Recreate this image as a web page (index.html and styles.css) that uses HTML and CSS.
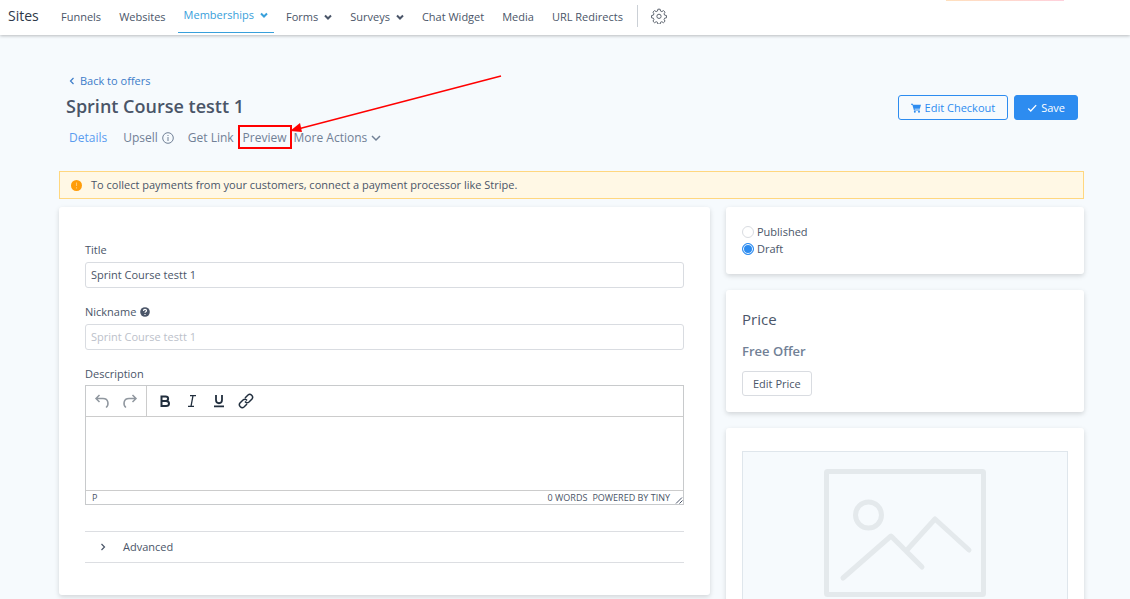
FILE: index.html
```html
<!DOCTYPE html>
<html lang="en">
<head>
    <meta charset="UTF-8">
    <meta name="viewport" content="width=device-width, initial-scale=1.0">
    <title>Sprint Course testt 1</title>
    <link rel="stylesheet" href="styles.css">
</head>
<body>

<header class="topbar">
    <span class="brand">Sites</span>
    <nav class="nav">
        <a href="#">Funnels</a>
        <a href="#">Websites</a>
        <button type="button" class="active">Memberships <svg class="caret" viewBox="0 0 8 8"><path d="M1 2.5l3 3 3-3"/></svg></button>
        <button type="button">Forms <svg class="caret" viewBox="0 0 8 8"><path d="M1 2.5l3 3 3-3"/></svg></button>
        <button type="button">Surveys <svg class="caret" viewBox="0 0 8 8"><path d="M1 2.5l3 3 3-3"/></svg></button>
        <a href="#">Chat Widget</a>
        <a href="#">Media</a>
        <a href="#">URL Redirects</a>
    </nav>
    <button type="button" class="settings" aria-label="Settings">
        <svg viewBox="0 0 24 24"><path d="M10.3 1.8h3.4l.6 2.8 2 .8 2.4-1.5 2.4 2.4-1.5 2.4.8 2 2.8.6v3.4l-2.8.6-.8 2 1.5 2.4-2.4 2.4-2.4-1.5-2 .8-.6 2.8h-3.4l-.6-2.8-2-.8-2.4 1.5-2.4-2.4 1.5-2.4-.8-2-2.8-.6v-3.4l2.8-.6.8-2-1.5-2.4 2.4-2.4 2.4 1.5 2-.8z"/><circle cx="12" cy="12.5" r="3.2"/></svg>
    </button>
    <span class="strip"></span>
</header>

<main class="page">
    <div class="page-head">
        <div>
            <a href="#" class="back"><svg viewBox="0 0 8 8"><path d="M5.5 1l-3 3 3 3"/></svg>Back to offers</a>
            <h1>Sprint Course testt 1</h1>
        </div>
        <div class="actions">
            <button type="button" class="btn btn-outline">
                <svg viewBox="0 0 12 12"><path fill="currentColor" d="M0 1h2.2l.4 1.2H12L10.6 7H4.3l.2.9h6v1H3.6L1.6 2H0z"/><circle cx="4.6" cy="10.4" r="1.2" fill="currentColor"/><circle cx="9.6" cy="10.4" r="1.2" fill="currentColor"/></svg>
                Edit Checkout
            </button>
            <button type="button" class="btn btn-primary">
                <svg viewBox="0 0 12 12"><path d="M1.5 6.5l3 3 6.5-7" fill="none" stroke="currentColor" stroke-width="1.6"/></svg>
                Save
            </button>
        </div>
    </div>

    <nav class="tabs">
        <a href="#" class="tab current">Details</a>
        <a href="#" class="tab upsell">Upsell
            <svg viewBox="0 0 12 12"><circle cx="6" cy="6" r="5.3"/><path d="M6 5v4M6 3v1"/></svg>
        </a>
        <a href="#" class="tab link">Get Link</a>
        <a href="#" class="tab preview">Preview
            <svg class="arrow" viewBox="0 0 214 60"><path d="M8 55L211 2" stroke="#f00" stroke-width="1.5"/><path d="M0 57l10-8 2 9z" fill="#f00"/></svg>
        </a>
        <button type="button" class="tab more">More Actions <svg viewBox="0 0 10 10"><path d="M1 3l4 4 4-4"/></svg></button>
    </nav>

    <div class="alert">
        <svg viewBox="0 0 10 10"><circle cx="5" cy="5" r="5" fill="#ff9d0a"/><path d="M5 2.2v3.3M5 6.6v1.1" stroke="#ffc973"/></svg>
        To collect payments from your customers, connect a payment processor like Stripe.
    </div>

    <div class="columns">
        <form class="card offer-form">
            <div class="field">
                <label for="title">Title</label>
                <input type="text" id="title" name="title" value="Sprint Course testt 1">
            </div>
            <div class="field">
                <label for="nickname">Nickname
                    <svg viewBox="0 0 10 10"><circle cx="5" cy="5" r="4.8" fill="#4a5568"/><path d="M3.5 4c0-2 3-2 3-.3 0 1-1.5 1-1.5 2.1M5 7v1" fill="none" stroke="#fff" stroke-width="1.2"/></svg>
                </label>
                <input type="text" id="nickname" name="nickname" placeholder="Sprint Course testt 1">
            </div>
            <div class="field rich">
                <label for="description">Description</label>
                <div class="editor">
                    <div class="toolbar">
                        <div class="group history">
                            <button type="button" aria-label="Undo"><svg viewBox="0 0 16 16"><path d="M5.5 2L2 5.500 5.500 9M2 5.500h7c6 0 6 7 3 9"/></svg></button>
                            <button type="button" aria-label="Redo"><svg viewBox="0 0 16 16"><path d="M10.5 2L14 5.500 10.500 9M14 5.500H7c-6 0-6 7-3 9"/></svg></button>
                        </div>
                        <div class="group format">
                            <button type="button" aria-label="Bold"><svg viewBox="0 0 16 16"><path d="M4.5 3.500h4c3.500 0 3.500 4.500 0 4.500h-4zM4.500 8h4.500c4 0 4 5 0 5H4.500z" stroke-width="2"/></svg></button>
                            <button type="button" aria-label="Italic"><svg viewBox="0 0 16 16"><path d="M6 2.700h6M4 13.300h6M9 2.700L7 13.300" stroke-width="1.3"/></svg></button>
                            <button type="button" aria-label="Underline"><svg viewBox="0 0 16 16"><path d="M5 2v5c0 4.300 6 4.300 6 0V2M3 13.300h10" stroke-width="1.8"/></svg></button>
                            <button type="button" aria-label="Link"><svg viewBox="0 0 16 16"><path d="M7 5l3-3c2.500-2 6 1.500 4 4l-3 3c-1.500 1.200-3 .8-4-.5M9 11l-3 3c-2.500 2-6-1.500-4-4l3-3c1.500-1.200 3-.8 4 .5" stroke-width="1.5"/></svg></button>
                        </div>
                    </div>
                    <textarea id="description" name="description"></textarea>
                    <div class="statusbar">
                        <span>P</span>
                        <span class="words">0 WORDS</span>
                        <a href="#">POWERED BY TINY</a>
                        <svg viewBox="0 0 8 8"><path d="M1 7.500L7 1.500M4.500 7.500L7.500 4.500"/></svg>
                    </div>
                </div>
            </div>
            <button type="button" class="advanced"><svg viewBox="0 0 8 8"><path d="M2.500 1l3 3-3 3"/></svg>Advanced</button>
        </form>

        <aside class="side">
            <section class="card status">
                <label><input type="radio" name="status" value="published">Published</label>
                <label><input type="radio" name="status" value="draft" checked>Draft</label>
            </section>
            <section class="card price">
                <h2>Price</h2>
                <h3>Free Offer</h3>
                <button type="button" class="btn btn-plain">Edit Price</button>
            </section>
            <section class="card media">
                <div class="placeholder">
                    <svg viewBox="0 0 162 128"><rect x="2.5" y="2.5" width="157" height="123" rx="1"/><circle cx="44.5" cy="46" r="13"/><path d="M19 109l48-42 31 31M83 81l28-31 34 31" stroke-linecap="round" stroke-linejoin="round"/></svg>
                </div>
            </section>
        </aside>
    </div>
</main>

</body>
</html>
```
FILE: styles.css
```css
* {
    box-sizing: border-box;
}
body {
    font-family: 'Open Sans', 'Noto Sans', sans-serif;
    font-size: 11px;
    line-height: 16px;
    color: #4a5568;
    background-color: #f6fafd;
    height: 100vh;
    margin: 0;
    overflow: hidden;
}
a {
    color: inherit;
    text-decoration: none;
}
button {
    font: inherit;
    color: inherit;
    background: none;
    border: none;
    padding: 0;
    cursor: pointer;
}
svg {
    fill: none;
    stroke-width: 1;
    flex: none;
}
h1, h2, h3 {
    margin: 0;
    font-weight: 600;
}

/* top navigation */
.topbar {
    display: flex;
    align-items: center;
    height: 35px;
    padding-left: 8px;
    background-color: white;
    box-shadow: 0 1px 3px rgba(0, 0, 0, 0.25);
    position: relative;
}
.brand {
    font-size: 14px;
    font-weight: 500;
    color: #2d3748;
    width: 47px;
    padding-bottom: 4px;
}
.nav {
    display: flex;
    gap: 6px;
    height: 33px;
    align-self: flex-start;
    font-weight: 500;
}
.nav a,
.nav button {
    display: flex;
    align-items: center;
    gap: 6px;
    padding: 0 6px;
    white-space: nowrap;
}
.nav .active {
    color: #38a0db;
    padding-bottom: 2px;
    border-bottom: 1px solid #38a0db;
}
.caret {
    width: 8px;
    height: 8px;
    stroke: currentColor;
    stroke-width: 2;
}
.settings {
    display: flex;
    align-items: center;
    align-self: flex-start;
    height: 22px;
    margin: 5px 0 0 8px;
    padding-left: 13px;
    border-left: 1px solid #cbd0d6;
}
.settings svg {
    width: 16px;
    height: 16px;
    stroke: #5f6670;
    stroke-width: 1.5;
}
.strip {
    align-self: flex-start;
    width: 118px;
    height: 1px;
    margin: 0 66px 0 auto;
    background: linear-gradient(to right, #ffe0bd, #ffd0dc);
}

/* page heading */
.page {
    padding: 38px 46px 0 59px;
}
.page-head {
    display: flex;
    justify-content: space-between;
    align-items: flex-end;
    padding: 0 6px 0 7px;
}
.back {
    display: flex;
    align-items: center;
    gap: 4px;
    padding-left: 2px;
    color: #3c7cc9;
}
.back svg {
    width: 8px;
    height: 8px;
    stroke: currentColor;
    stroke-width: 1.2;
}
h1 {
    font-size: 18px;
    line-height: 24px;
    margin-top: 5px;
    padding-bottom: 2px;
}
.actions {
    display: flex;
    gap: 6px;
}
.btn {
    display: flex;
    align-items: center;
    justify-content: center;
    gap: 4px;
    height: 25px;
    padding: 0 12px;
    border: 1px solid #d9dce1;
    border-radius: 3px;
    white-space: nowrap;
}
.btn svg {
    width: 10px;
    height: 10px;
}
.btn-outline {
    color: #2d8cf0;
    border-color: #2d8cf0;
}
.btn-primary {
    color: white;
    background-color: #2d8cf0;
    border-color: #2d8cf0;
    font-weight: 500;
}
.btn-plain {
    padding: 0 10px;
}
.tabs {
    display: flex;
    margin-top: 5px;
    padding-left: 10px;
    font-size: 12px;
    color: #718096;
}
.tab {
    display: flex;
    align-items: center;
    height: 24px;
    padding-top: 2px;
    gap: 4px;
    white-space: nowrap;
}
.tab svg {
    width: 12px;
    height: 12px;
    stroke: currentColor;
}
.current {
    color: #5a9cf0;
    margin-right: 16px;
}
.upsell {
    margin-right: 14px;
}
.link {
    margin-right: 4px;
}
.preview {
    position: relative;
    padding: 2px 3px 0;
    border: 2px solid #f00;
    margin-right: 2px;
}
.tab .arrow {
    position: absolute;
    left: 100%;
    bottom: 13px;
    width: 214px;
    height: 60px;
    stroke: none;
}
.tab.more svg {
    width: 10px;
    height: 10px;
    stroke-width: 1.5;
}

.alert {
    display: flex;
    align-items: center;
    gap: 9px;
    height: 28px;
    margin: 22px 0 8px;
    padding-left: 11px;
    background-color: #fff8e5;
    border: 1px solid #ffd77f;
}
.alert svg {
    width: 11px;
    height: 11px;
}

/* cards */
.columns {
    display: grid;
    grid-template-columns: 651fr 358fr;
    gap: 16px;
    align-items: start;
}
.card {
    background-color: white;
    border-radius: 3px;
    box-shadow: 0 2px 5px rgba(0, 0, 0, 0.15);
}
.offer-form {
    padding: 35px 26px 32px;
}
.field {
    margin-bottom: 16px;
}
.field label {
    display: flex;
    align-items: center;
    gap: 4px;
    margin-bottom: 4px;
}
.field label svg {
    width: 10px;
    height: 10px;
}
.rich label {
    margin-bottom: 3px;
}
input[type="text"] {
    display: block;
    width: 100%;
    height: 26px;
    padding: 0 5px 2px;
    border: 1px solid #d9dce1;
    border-radius: 3px;
    font: inherit;
    color: #4a5568;
}
input::placeholder {
    color: #bcc1ca;
}
.editor {
    border: 1px solid #c8cacc;
}
.toolbar {
    display: flex;
    height: 31px;
    border-bottom: 1px solid #ccc;
}
.group {
    display: flex;
    align-items: center;
}
.toolbar button {
    display: flex;
}
.toolbar svg {
    width: 16px;
    height: 16px;
    stroke: #222f3e;
    stroke-width: 1.5;
}
.history {
    gap: 12px;
    padding: 0 8px;
    border-right: 1px solid #ccc;
}
.history svg {
    stroke: #90979f;
}
.format {
    gap: 11px;
    padding-left: 10px;
}
textarea {
    display: block;
    width: 100%;
    height: 73px;
    border: none;
    resize: none;
    outline: none;
    font: inherit;
}
.statusbar {
    display: flex;
    align-items: center;
    gap: 5px;
    height: 14px;
    padding-left: 6px;
    border-top: 1px solid #ccc;
    font-size: 9px;
}
.statusbar .words {
    margin-left: auto;
}
.statusbar svg {
    width: 8px;
    height: 8px;
    stroke: #4a5568;
    align-self: flex-end;
}
.advanced {
    display: flex;
    align-items: center;
    gap: 16px;
    width: 100%;
    height: 32px;
    margin-top: 26px;
    padding-left: 14px;
    border: 1px solid #dcdee2;
    border-width: 1px 0;
}
.advanced svg {
    width: 8px;
    height: 8px;
    stroke: currentColor;
    stroke-width: 1.2;
}
.side {
    display: grid;
    gap: 16px;
}
.status {
    padding: 16px 16px 17px;
}
.status label {
    display: flex;
    align-items: center;
    gap: 3px;
    height: 17px;
}
input[type="radio"] {
    appearance: none;
    width: 12px;
    height: 12px;
    margin: 0;
    border: 1px solid #d9dce1;
    border-radius: 50%;
}
input[type="radio"]:checked {
    border-color: #2d8cf0;
    background-color: #2d8cf0;
    box-shadow: inset 0 0 0 1px white;
}
.price {
    padding: 17px 16px 16px;
}
h2 {
    font-size: 15px;
    font-weight: 500;
    line-height: 24px;
}
h3 {
    margin: 10px 0;
    font-size: 13px;
    line-height: 20px;
    color: #718096;
}
.media {
    padding: 23px 16px;
}
.placeholder {
    display: flex;
    justify-content: center;
    padding: 17px;
    background-color: #f6fafd;
    border: 1px solid #dfe6ec;
}
.placeholder svg {
    width: 162px;
    height: 128px;
    stroke: #e4e9ec;
    stroke-width: 5;
}
```
